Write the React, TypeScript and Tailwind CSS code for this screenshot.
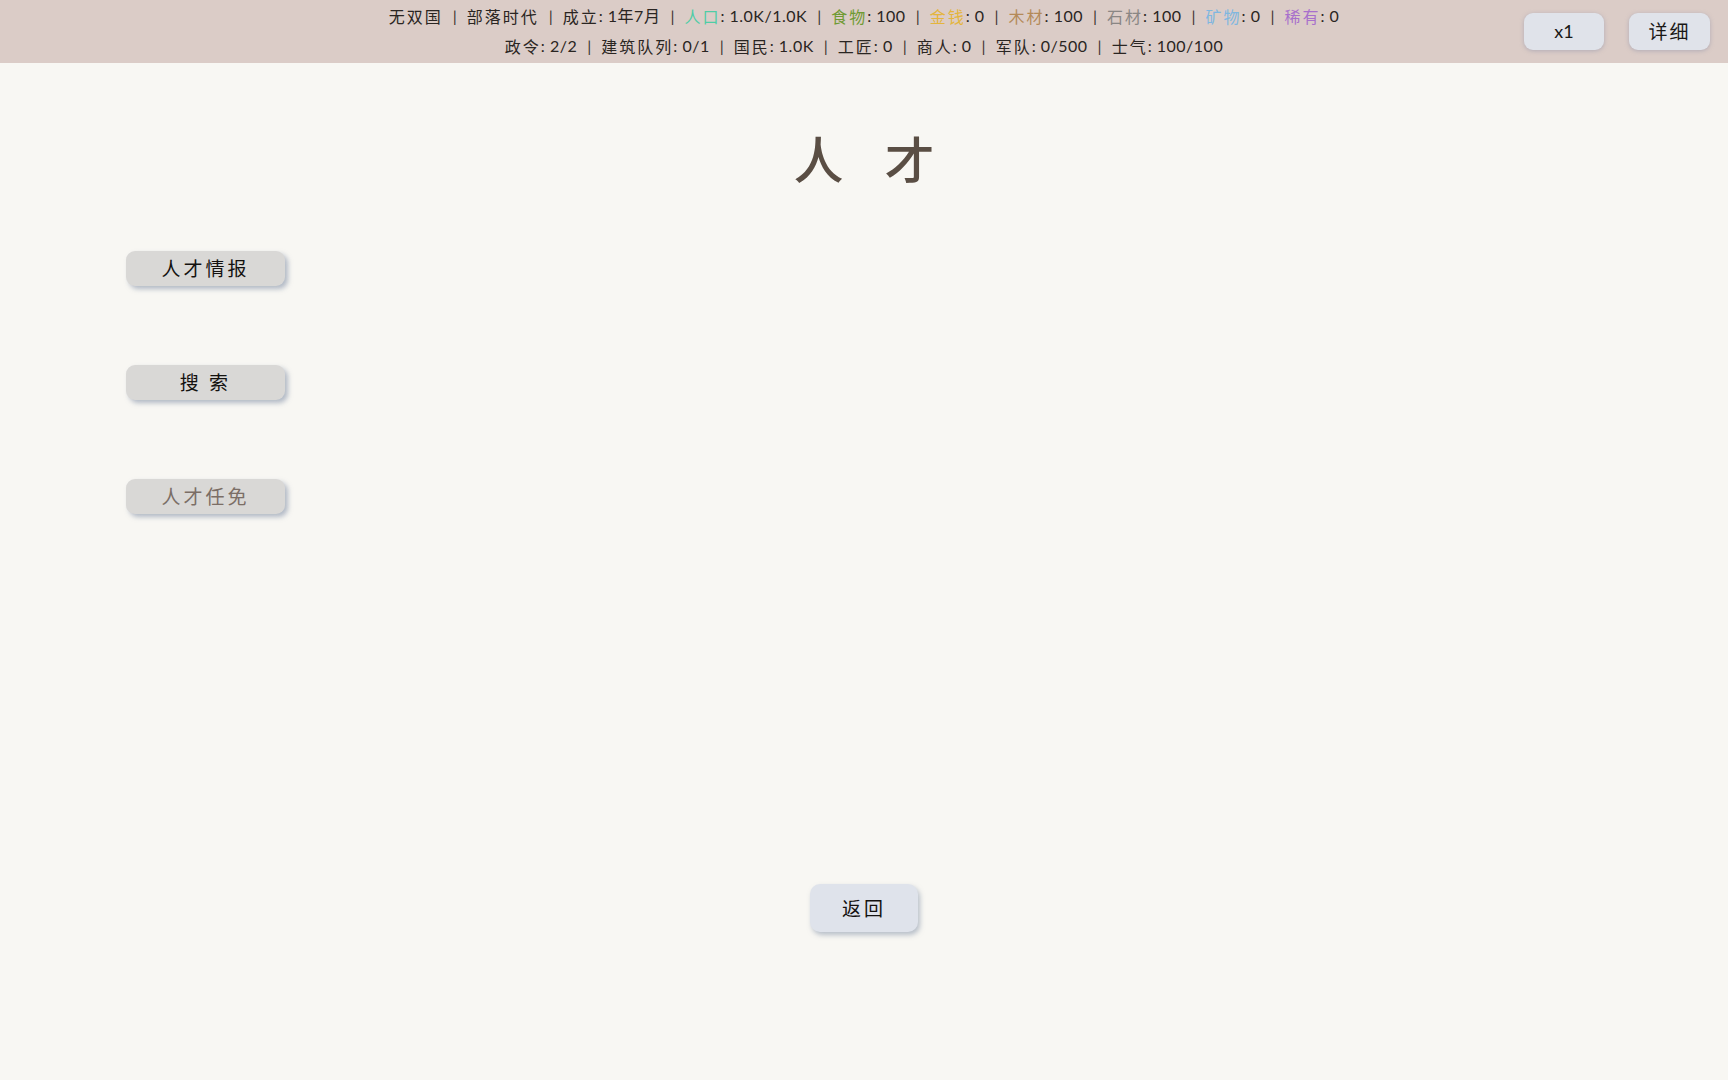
import React from "react";

const FONT = { fontFamily: '"Noto Sans CJK SC", "Noto Sans", sans-serif' };
const NUM = '"Lato", "Noto Sans CJK SC", sans-serif';

type Item = { label: string; value: string; color?: string };

const LINE1: Item[] = [
  { label: "无双国", value: "" },
  { label: "部落时代", value: "" },
  { label: "成立", value: "1年7月" },
  { label: "人口", value: "1.0K/1.0K", color: "text-[#4fcda6]" },
  { label: "食物", value: "100", color: "text-[#6f9a33]" },
  { label: "金钱", value: "0", color: "text-[#e4b53c]" },
  { label: "木材", value: "100", color: "text-[#b48a58]" },
  { label: "石材", value: "100", color: "text-[#8a8684]" },
  { label: "矿物", value: "0", color: "text-[#7fb7e0]" },
  { label: "稀有", value: "0", color: "text-[#a870cc]" },
];

const LINE2: Item[] = [
  { label: "政令", value: "2/2" },
  { label: "建筑队列", value: "0/1" },
  { label: "国民", value: "1.0K" },
  { label: "工匠", value: "0" },
  { label: "商人", value: "0" },
  { label: "军队", value: "0/500" },
  { label: "士气", value: "100/100" },
];

function StatLine({ items }: { items: Item[] }) {
  return (
    <div className="flex items-center justify-center text-[16px] leading-[20px] text-[#2a2522]">
      {items.map((it, i) => (
        <React.Fragment key={i}>
          {i > 0 && <span className="mx-[10px] text-[#3a3431]" style={{ fontFamily: NUM }}>|</span>}
          <span className={`tracking-[2px] ${it.color ?? ""}`}>{it.label}</span>
          {it.value && (
            <span className="tracking-[0.5px]" style={{ fontFamily: NUM }}>
              :&nbsp;{it.value}
            </span>
          )}
        </React.Fragment>
      ))}
    </div>
  );
}

function SideButton({ children, muted }: { children: React.ReactNode; muted?: boolean }) {
  return (
    <button
      className={`w-[159px] h-[35px] rounded-[9px] bg-[#d9d8d6] text-[19px] tracking-[3px] shadow-[3px_3px_5px_rgba(120,135,160,0.55)] ${
        muted ? "text-[#7b6e66]" : "text-[#141210]"
      }`}
    >
      {children}
    </button>
  );
}

export default function App() {
  return (
    <div className="min-h-screen w-full bg-[#f8f7f3] flex flex-col" style={FONT}>
      <header className="h-[63px] bg-[#dbccc7] relative flex flex-col items-center justify-center gap-[10px] pb-[2px]">
        <StatLine items={LINE1} />
        <StatLine items={LINE2} />
        <div className="absolute right-[18px] top-[13px] flex gap-[25px]">
          <button
            className="w-[80px] h-[37px] rounded-[9px] bg-[#e0e3ea] text-[18px] text-[#1a1816] shadow-[0_1px_4px_rgba(150,150,170,0.6)]"
            style={{ fontFamily: NUM }}
          >
            x1
          </button>
          <button className="w-[81px] h-[37px] rounded-[9px] bg-[#e0e3ea] text-[19px] tracking-[2px] text-[#1a1816] shadow-[0_1px_4px_rgba(150,150,170,0.6)]">
            详细
          </button>
        </div>
      </header>

      <main className="flex-1 flex flex-col">
        <h1 className="text-center text-[50px] leading-[60px] mt-[64px] text-[#5a4e44] tracking-[0.3em] font-medium pl-[0.3em]">
          人 才
        </h1>

        <div className="flex flex-col gap-[79px] pl-[126px] mt-[64px]">
          <SideButton>人才情报</SideButton>
          <SideButton>搜 索</SideButton>
          <SideButton muted>人才任免</SideButton>
        </div>

        <div className="flex justify-center mt-[370px]">
          <button className="w-[108px] h-[48px] rounded-[10px] bg-[#dfe3eb] text-[19px] tracking-[3px] text-[#141210] shadow-[2px_3px_5px_rgba(120,135,160,0.5)]">
            返回
          </button>
        </div>
      </main>
    </div>
  );
}
